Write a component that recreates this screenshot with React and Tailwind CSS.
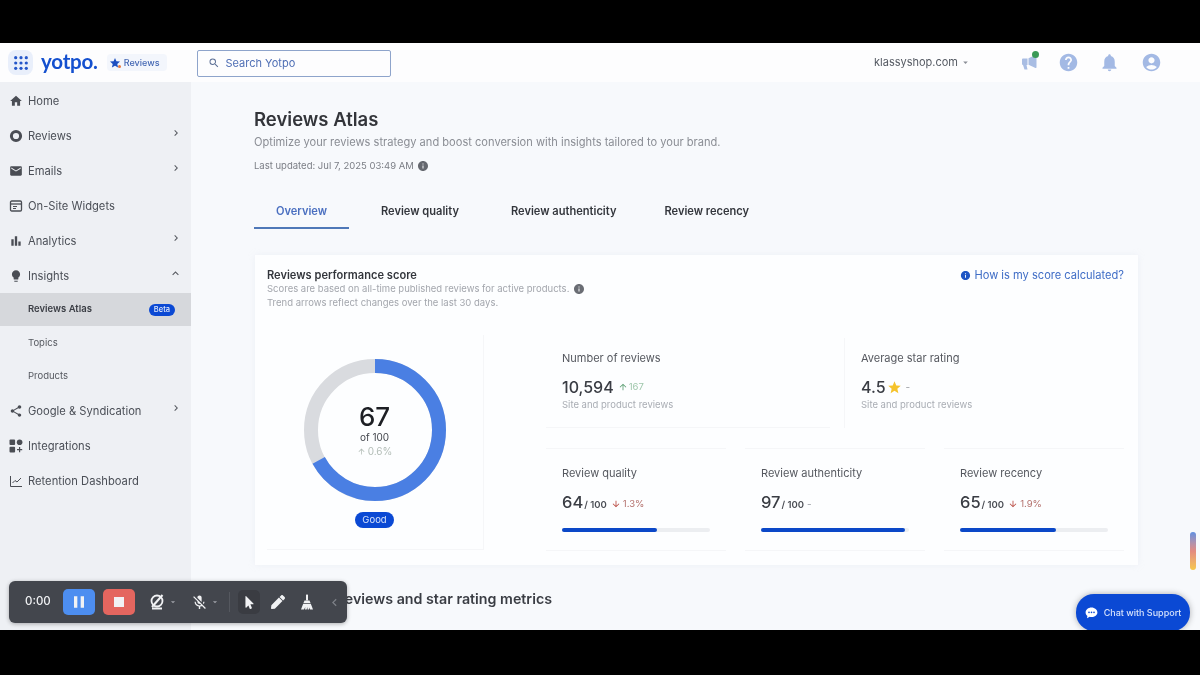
import React from "react";
import { MdHome, MdEmail, MdBarChart, MdLightbulb, MdShare, MdSearch, MdHelp, MdNotifications, MdAccountCircle, MdInfo, MdArrowUpward, MdArrowDownward, MdStar, MdChevronRight, MdExpandLess, MdArrowDropDown, MdPause, MdStop, MdMicOff, MdChevronLeft } from "react-icons/md";
import { FaMousePointer, FaPen } from "react-icons/fa";

const Ring = ({ size = 14 }) => (
  <svg width={size} height={size} viewBox="0 0 14 14"><circle cx="7" cy="7" r="4.6" fill="none" stroke="currentColor" strokeWidth="3" /></svg>
);
const Tiles = ({ size = 14 }) => (
  <svg width={size} height={size} viewBox="0 0 14 14" fill="currentColor">
    <rect x="0.5" y="0.5" width="5.6" height="5.6" rx="1" /><rect x="7.8" y="0.5" width="5.6" height="5.6" rx="2.8" /><rect x="0.5" y="7.8" width="5.6" height="5.6" rx="1" /><path d="M10 8h1.2v2h2v1.2h-2v2H10v-2H8V10h2z" />
  </svg>
);
const Widget = ({ size = 14 }) => (
  <svg width={size} height={size} viewBox="0 0 14 14" fill="none" stroke="currentColor">
    <rect x="1.5" y="2" width="11" height="10" rx="1.2" strokeWidth="1.3" /><path d="M1.5 5h11" strokeWidth="1.3" /><path d="M4 7.5h4M4 9.500h3" strokeWidth="1" />
  </svg>
);
const AxisChart = ({ size = 14 }) => (
  <svg width={size} height={size} viewBox="0 0 14 14" fill="none" stroke="currentColor" strokeWidth="1">
    <path d="M1.5 2v10.5H13" /><path d="M3.5 9 6 6.5l2 1.5 4-4" />
  </svg>
);
const Grid9 = () => (
  <svg width="14" height="14" viewBox="0 0 14 14" fill="#2456c9">
    {[1.7, 7, 12.3].flatMap((y) => [1.7, 7, 12.3].map((x) => <circle key={`${x}-${y}`} cx={x} cy={y} r="1.6" />))}
  </svg>
);
const CamOff = () => (
  <svg width="18" height="18" viewBox="0 0 18 18" fill="none" stroke="#f1f2f4" strokeWidth="1.8">
    <circle cx="9" cy="8" r="5.5" /><path d="M4 15.5h10" strokeWidth="2" /><path d="M14.5 2 4 14" strokeWidth="2" />
  </svg>
);
const Broom = () => (
  <svg width="14" height="16" viewBox="0 0 14 16" fill="#f1f2f4">
    <rect x="6" y="0.5" width="2" height="6" rx="0.6" /><path d="M4.5 6.5h5L10.5 9h-7z" /><path d="M3.2 9.7h7.6L13 15.500H10l-.6-2-.4 2H7.600L7.300 13l-.6 2.500H5l.3-2.400-1.300 2.400H1z" />
  </svg>
);
const ChatDots = () => (
  <svg width="13" height="12" viewBox="0 0 13 12">
    <path d="M6.5.5C3.2.5.6 2.700.6 5.400c0 1.400.7 2.600 1.800 3.500L2 11.300l2.700-1.500c.6.1 1.200.2 1.800.2 3.300 0 5.900-2.100 5.900-4.600S9.800.5 6.500.5z" fill="#fff" />
    <circle cx="4" cy="5.400" r="0.8" fill="#0b49d4" /><circle cx="6.500" cy="5.400" r="0.8" fill="#0b49d4" /><circle cx="9" cy="5.400" r="0.8" fill="#0b49d4" />
  </svg>
);
const Megaphone = () => (
  <svg width="16" height="17" viewBox="0 0 16 17" fill="currentColor">
    <path d="M1 5.500q0-1 1-1h4.500v6.500l-1 0 1 4.500H3.500L2 11H2q-1 0-1-1z" /><path d="M7.500 4.300 14.500 1q1-.3 1 .7v11.600q0 1-1 .7l-7-3.200z" />
  </svg>
);

const nav = [
  { label: "Home", Icon: MdHome },
  { label: "Reviews", Icon: Ring, arrow: true },
  { label: "Emails", Icon: MdEmail, arrow: true },
  { label: "On-Site Widgets", Icon: Widget },
  { label: "Analytics", Icon: MdBarChart, arrow: true },
  { label: "Insights", Icon: MdLightbulb, up: true },
];
const nav2 = [
  { label: "Google & Syndication", Icon: MdShare, arrow: true },
  { label: "Integrations", Icon: Tiles },
  { label: "Retention Dashboard", Icon: AxisChart },
];

function NavRow({ item }) {
  const { label, Icon, arrow, up } = item;
  return (
    <div className="flex h-[35px] items-center pl-[9px] pr-[9px] pt-[1px] text-[11.2px] text-[#4b4f57]">
      <span className="flex w-[19px] shrink-0 items-center text-[#4a4d54]"><Icon size={14} /></span>
      <span>{label}</span>
      {arrow && <MdChevronRight size={12} className="ml-auto -mt-[6px] text-[#55585f]" />}
      {up && <MdExpandLess size={13} className="ml-auto -mt-[5px] text-[#55585f]" />}
    </div>
  );
}

function Sidebar() {
  return (
    <aside className="flex w-[191px] shrink-0 flex-col bg-[#eef0f4] pt-[1px]">
      {nav.map((n) => <NavRow key={n.label} item={n} />)}
      <div className="flex h-[33px] items-center justify-between bg-[#d6d8dc] pl-[28px] pr-[16px] text-[9.5px] font-semibold text-[#3b3e45]">
        <span>Reviews Atlas</span>
        <span className="rounded-full bg-[#0b49d4] px-[5px] text-[7.5px] leading-[12px] font-medium text-[#dfe8fb]">Beta</span>
      </div>
      <div className="flex h-[33.5px] items-center pl-[28px] text-[9.5px] text-[#55585f]">Topics</div>
      <div className="flex h-[33.5px] items-center pl-[28px] text-[9.5px] text-[#55585f]">Products</div>
      {nav2.map((n) => <NavRow key={n.label} item={n} />)}
    </aside>
  );
}

function Header() {
  return (
    <header className="flex h-[39px] shrink-0 items-center bg-[#fdfdfe]">
      <div className="ml-[8px] flex h-[25px] w-[25px] items-center justify-center rounded-lg bg-[#e9effb]"><Grid9 /></div>
      <span className="ml-[8px] -mt-[3px] text-[20.5px] leading-none font-bold tracking-[-0.2px] text-[#1450cf]" style={{ fontFamily: "Lato, sans-serif" }}>yotpo.</span>
      <div className="relative ml-[9px] flex h-[17px] items-center gap-[3px] rounded bg-[#f3f6fc] pl-[2px] pr-[7px] text-[9px] font-medium text-[#4669b4]">
        <MdStar size={12} className="text-[#1d4fc0]" />Reviews
        <span className="absolute bottom-[3px] left-[11px] h-[3px] w-[3px] rounded-full bg-[#e8763a]" />
      </div>
      <div className="ml-[30px] mt-[1px] flex h-[27px] w-[194px] items-center gap-[6px] rounded-[2px] border border-[#8ea4cb] pl-[10px] text-[11px] text-[#4f6fb5]">
        <MdSearch size={12} className="text-[#5d7096]" />Search Yotpo
      </div>
      <div className="ml-auto flex items-center pr-[38px]">
        <span className="text-[11px] text-[#555a63]">klassyshop.com</span>
        <MdArrowDropDown size={11} className="ml-[2px] text-[#8a8e96]" />
        <div className="relative ml-[50px] text-[#a9bde3]">
          <Megaphone />
          <span className="absolute -top-[3px] -right-[2px] h-[7px] w-[7px] rounded-full bg-[#3b9a57]" />
        </div>
        <MdHelp size={21} className="ml-[21px] text-[#a3b9e4]" />
        <MdNotifications size={21} className="ml-[20px] text-[#a3b9e4]" />
        <MdAccountCircle size={21} className="ml-[21px] text-[#a3b9e4]" />
      </div>
    </header>
  );
}

function Tabs() {
  const tabs = [["Overview", "w-[95px] justify-center border-b-2 border-[#4f78b8] text-[#4a6fc0]"], ["Review quality", "ml-[32px] border-b-2 border-transparent text-[#33363c]"], ["Review authenticity", "ml-[52px] border-b-2 border-transparent text-[#33363c]"], ["Review recency", "ml-[48px] border-b-2 border-transparent text-[#33363c]"]];
  return (
    <div className="mt-[20px] flex h-[36px] text-[11.1px] font-semibold">
      {tabs.map(([t, c]) => <div key={t} className={`flex items-center pt-[2px] ${c}`}>{t}</div>)}
    </div>
  );
}

function Donut() {
  const r = 64;
  const c = 2 * Math.PI * r;
  return (
    <div className="flex h-[215px] w-[217px] shrink-0 flex-col items-center border-b border-r border-[#f5f6f8] pr-[1px] pt-[24px]">
      <div className="relative h-[142px] w-[142px]">
        <svg width="142" height="142" viewBox="0 0 142 142" className="-rotate-90">
          <circle cx="71" cy="71" r={r} fill="none" stroke="#d9dbdf" strokeWidth="14" />
          <circle cx="71" cy="71" r={r} fill="none" stroke="#4a7fe3" strokeWidth="14" strokeDasharray={`${c * 0.67} ${c}`} />
        </svg>
        <div className="absolute inset-0 flex flex-col items-center justify-center">
          <span className="text-[26px] leading-[28px] font-medium text-[#1d1f24]">67</span>
          <span className="text-[10px] leading-[13px] text-[#44474e]">of 100</span>
          <span className="mt-[1px] flex items-center text-[10px] leading-[13px] text-[#b3bdb7]"><MdArrowUpward size={9} className="mr-[2px]" />0.6%</span>
        </div>
      </div>
      <span className="mt-[11px] rounded-full bg-[#0b49d4] px-[7px] text-[9.5px] leading-[16px] text-[#d9e4fb]">Good</span>
    </div>
  );
}

function Top({ title, value, extra, className }) {
  return (
    <div className={`h-[90px] border-[#f5f6f8] pl-[16px] pt-[13px] ${className}`}>
      <div className="text-[11px] leading-[14px] text-[#55585f]">{title}</div>
      <div className="mt-[12px] flex items-center text-[16px] leading-[20px] font-medium text-[#3a3d44]">{value}{extra}</div>
      <div className="mt-[1px] text-[9.5px] leading-[13px] text-[#a9adb4]">Site and product reviews</div>
    </div>
  );
}

function Score({ title, value, delta, pct, ml }) {
  return (
    <div className={`h-[103px] w-[180px] border-y border-[#f5f6f8] pl-[16px] pt-[17px] ${ml}`}>
      <div className="text-[11px] leading-[14px] text-[#55585f]">{title}</div>
      <div className="mt-[12px] flex items-baseline text-[16.5px] leading-[20px] font-medium text-[#3a3d44]">
        {value}<span className="ml-[1px] text-[9.5px] font-semibold text-[#4b4e55]">/ 100</span>
        {delta ? (
          <span className="ml-[4px] flex items-center self-center text-[9.5px] font-normal text-[#b3706c]"><MdArrowDownward size={10} className="mr-[2px] text-[#b8483f]" />{delta}</span>
        ) : (
          <span className="ml-[3px] text-[10px] font-normal text-[#9a9da3]">-</span>
        )}
      </div>
      <div className="mt-[13px] h-[4px] w-[148px] rounded-full bg-[#eceef1]">
        <div className="h-full rounded-full bg-[#0b48c8]" style={{ width: `${pct}%` }} />
      </div>
    </div>
  );
}

function Card() {
  return (
    <section className="ml-[1px] mt-[26px] flex h-[310px] w-[883px] flex-col bg-[#fdfeff] px-[12px] pt-[12px] shadow-[0_0_6px_rgba(220,225,235,0.35)]">
      <div className="flex items-start justify-between">
        <div>
          <h2 className="text-[11.1px] leading-[16px] font-semibold text-[#33363c]">Reviews performance score</h2>
          <p className="flex items-center text-[9.5px] leading-[12px] text-[#a3a6ad]">Scores are based on all-time published reviews for active products.<MdInfo size={12} className="ml-[4px] text-[#6a6d74]" /></p>
          <p className="mt-[1px] text-[9.5px] leading-[13px] text-[#a3a6ad]">Trend arrows reflect changes over the last 30 days.</p>
        </div>
        <div className="mr-[2px] flex items-center text-[11.1px] leading-[16px] text-[#3f6dc6]"><MdInfo size={11} className="mr-[3px] text-[#1f56c4]" />How is my score calculated?</div>
      </div>
      <div className="mt-[26px] flex">
        <Donut />
        <div className="ml-[62px] flex flex-col pt-[3px]">
          <div className="flex">
            <Top className="w-[284px] border-b" title="Number of reviews" value="10,594" extra={<span className="ml-[4px] flex items-center text-[9.5px] font-normal text-[#9fc7ac]"><MdArrowUpward size={10} className="mr-[1px] text-[#5a9e72]" />167</span>} />
            <Top className="ml-[14px] w-[280px] border-l" title="Average star rating" value="4.5" extra={<><MdStar size={15} className="ml-[1px] text-[#f5c32c]" /><span className="ml-[4px] text-[10px] font-normal text-[#9a9da3]">-</span></>} />
          </div>
          <div className="mt-[20px] flex">
            <Score title="Review quality" value="64" delta="1.3%" pct={64} ml="" />
            <Score title="Review authenticity" value="97" pct={97} ml="ml-[19px]" />
            <Score title="Review recency" value="65" delta="1.9%" pct={65} ml="ml-[19px]" />
          </div>
        </div>
      </div>
    </section>
  );
}

function Recorder() {
  return (
    <div className="absolute bottom-[7px] left-[9px] flex h-[42px] w-[338px] items-center rounded-[6px] bg-[#43464d] pl-[16px] text-[#f1f2f4] shadow-[0_1px_4px_rgba(0,0,0,0.3)]">
      <span className="w-[38px] text-[11.5px] font-medium">0:00</span>
      <span className="flex h-[26px] w-[32px] items-center justify-center rounded-[5px] bg-[#4d8ef0]"><MdPause size={20} /></span>
      <span className="ml-[8px] flex h-[26px] w-[32px] items-center justify-center rounded-[5px] bg-[#e4665f]"><MdStop size={20} /></span>
      <span className="ml-[13px]"><CamOff /></span>
      <MdArrowDropDown size={10} className="ml-[2px] text-[#9fa2a8]" />
      <MdMicOff size={17} className="ml-[13px]" />
      <MdArrowDropDown size={10} className="ml-[2px] text-[#9fa2a8]" />
      <span className="ml-[9px] h-[20px] w-px bg-[#55585f]" />
      <span className="ml-[8px] flex h-[24px] w-[22px] items-center justify-center rounded-[5px] bg-[#3a3c42]"><FaMousePointer size={13} /></span>
      <FaPen size={14} className="ml-[11px]" />
      <span className="ml-[15px]"><Broom /></span>
      <MdChevronLeft size={15} className="ml-[13px] text-[#7d8087]" />
    </div>
  );
}

export default function App() {
  return (
    <div className="flex h-[675px] w-[1200px] flex-col overflow-hidden bg-black blur-[0.5px]" style={{ fontFamily: "Inter, 'Liberation Sans', sans-serif" }}>
      <div className="h-[43px] shrink-0" />
      <div className="relative flex h-[587px] shrink-0 flex-col overflow-hidden bg-[#f7f9fc]">
        <Header />
        <div className="flex min-h-0 flex-1">
          <Sidebar />
          <main className="flex-1 pl-[63px] pt-[24px]">
            <h1 className="text-[18.5px] leading-[27px] font-semibold text-[#33353a]">Reviews Atlas</h1>
            <p className="mt-[1px] text-[11.1px] leading-[16px] text-[#8a8d94]">Optimize your reviews strategy and boost conversion with insights tailored to your brand.</p>
            <p className="mt-[9px] flex items-center text-[9.5px] leading-[14px] text-[#7b7e85]">Last updated: Jul 7, 2025 03:49 AM<MdInfo size={12} className="ml-[3px] text-[#65686f]" /></p>
            <Tabs />
            <Card />
            <h2 className="mt-[24px] pl-[56px] text-[14.25px] leading-[20px] font-semibold text-[#3a3d44]">Top reviews and star rating metrics</h2>
          </main>
        </div>
        <Recorder />
        <div className="absolute right-[4px] bottom-[60px] h-[38px] w-[6px] rounded-full bg-gradient-to-b from-[#5f8fe0] via-[#e38a80] to-[#f6c84a]" />
        <div className="absolute right-[10px] -bottom-[1px] flex h-[37px] w-[114px] items-center justify-center gap-[6px] rounded-[18px] bg-[#0b49d4] text-[9px] font-medium text-[#d6e2fb] shadow-[0_0_6px_rgba(0,0,0,0.3)]">
          <ChatDots />Chat with Support
        </div>
      </div>
    </div>
  );
}
